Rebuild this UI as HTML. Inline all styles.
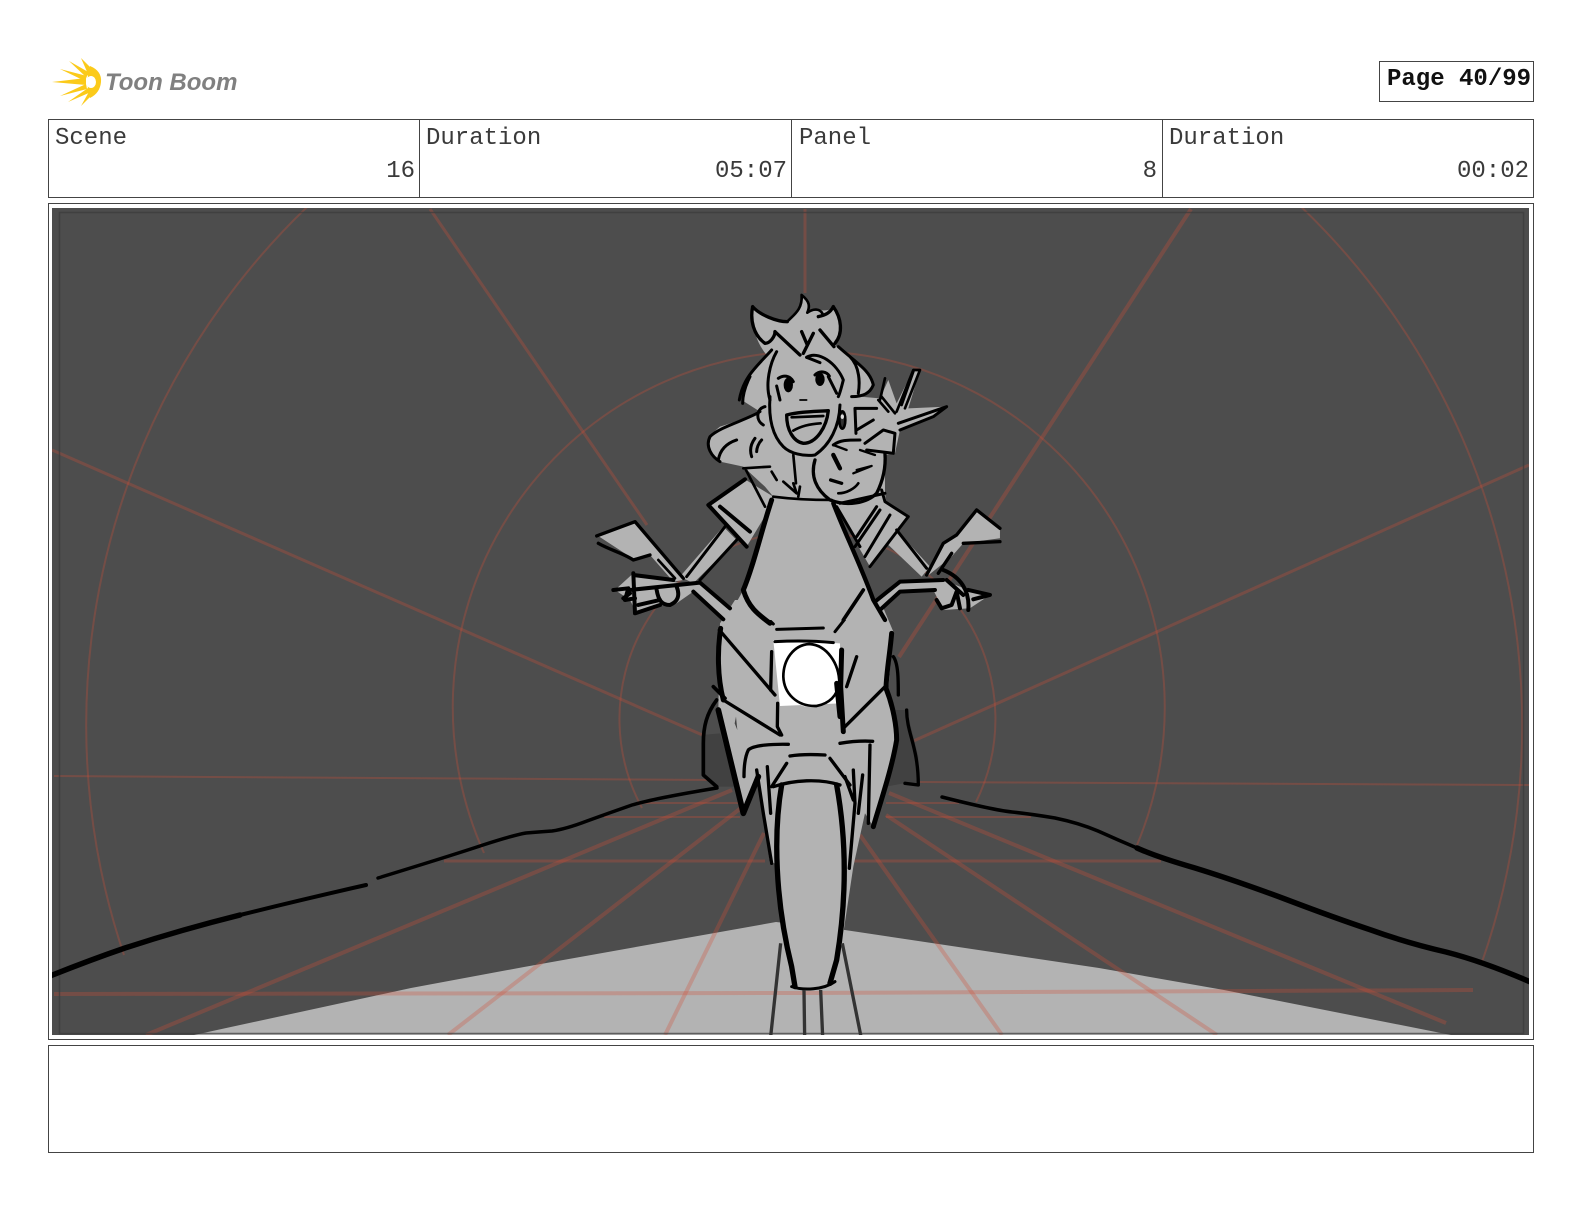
<!DOCTYPE html>
<html><head><meta charset="utf-8"><style>
html,body{margin:0;padding:0;background:#fff}
body{width:1584px;height:1224px;overflow:hidden;position:relative}
svg{position:absolute;left:0;top:0}
text{font-family:"Liberation Mono",monospace;font-size:24px;fill:#3a3a3a}
</style></head><body>
<svg width="1584" height="1224" viewBox="0 0 1584 1224" xmlns="http://www.w3.org/2000/svg">
<defs><clipPath id="c"><rect x="52" y="208" width="1477" height="827"/></clipPath></defs>
<!-- logo -->
<g fill="#fbca1a">
<path d="M52,82 L86,78 L86,85 Z"/>
<path d="M60,69 L87,76 L85,81 Z"/>
<path d="M69,61 L90,73 L86,77 Z"/>
<path d="M81,58 L94,71 L88,74 Z"/>
<path d="M60,96 L86,84 L87,89 Z"/>
<path d="M68,102 L88,88 L91,92 Z"/>
<path d="M81,106 L90,90 L95,92 Z"/>
<path d="M90,66 Q102,71 101,82 Q100,93 90,98 Q85,82 90,66 Z"/>
</g>
<ellipse cx="91" cy="82" rx="5" ry="6" fill="#fff"/>
<text x="105" y="90" style="font-family:'Liberation Sans',sans-serif;font-weight:bold;font-style:italic;font-size:24px;fill:#808080">Toon Boom</text>
<!-- page -->
<rect x="1379.5" y="61.5" width="154" height="40" fill="#fff" stroke="#444"/>
<text x="1387" y="85" style="font-weight:bold;fill:#111">Page 40/99</text>
<!-- header -->
<rect x="48.5" y="119.5" width="1485" height="78" fill="#fff" stroke="#444"/>
<path d="M419.5,119.5V197.5M791.5,119.5V197.5M1162.5,119.5V197.5" stroke="#444" fill="none"/>
<text x="55" y="144">Scene</text><text x="415" y="177" text-anchor="end">16</text>
<text x="426" y="144">Duration</text><text x="787" y="177" text-anchor="end">05:07</text>
<text x="799" y="144">Panel</text><text x="1157" y="177" text-anchor="end">8</text>
<text x="1169" y="144">Duration</text><text x="1529" y="177" text-anchor="end">00:02</text>
<!-- panel -->
<rect x="48.5" y="203.5" width="1485" height="836" fill="#fff" stroke="#444"/>
<rect x="48.5" y="1045.5" width="1485" height="107" fill="#fff" stroke="#444"/>
<g clip-path="url(#c)">
<rect x="52" y="208" width="1477" height="827" fill="#4d4d4d"/>
<path d="M194,1035 L411,988 L524,967 L776,922 L845,930 L1099,968 L1224,990 L1451,1035 Z" fill="#b3b3b3"/>
<g fill="none" stroke="#d24f38" stroke-opacity=".3">
<g stroke-width="2">
<path d="M124,955 A718,718 0 1 1 1482,962"/>
<path d="M484,853 A356,356 0 1 1 1137,845"/>
<path d="M642,808 A188,188 0 1 1 976,802"/>
<path d="M54,776 L717,780M920,782 L1535,785"/>
<path d="M604,817 H740M886,817 H1031M886,803 H959M640,803 H740"/>
</g>
<g stroke-width="3">
<path d="M52,450 L707,737M430,209 L647,525M805,209 V293M1529,465 L909,743"/>
<path d="M444,861 H765M853,861 H1161"/>
</g>
<g stroke-width="4">
<path d="M1191,209 L899,657"/>
<path d="M146,1035 L732,790M448,1035 L741,808M665,1035 L764,833M1002,1035 L860,835M1217,1035 L886,815M1446,1023 L889,793"/>
<path d="M54,994 L800,993 L1473,990"/>
</g>
</g>
<rect x="59.5" y="212.5" width="1464" height="821" fill="none" stroke="#3a3a3a" stroke-width="1.5" opacity=".7"/>
<!-- road -->
<g fill="none" stroke="#000" stroke-linecap="round" stroke-linejoin="round">
<path d="M50,976 Q90,960 125,948 Q180,930 240,915" stroke-width="5.5"/>
<path d="M240,915 Q300,900 366,885" stroke-width="4"/>
<path d="M378,878 Q453,855 483,845 Q514,835 526,833 Q538,832 552,831 Q566,829 587,821 Q609,813 632,805 Q656,798 717,788" stroke-width="3.5"/>
<path d="M942,797 Q993,810 1012,812 Q1031,814 1055,818 Q1079,823 1098,831 Q1118,840 1137,848" stroke-width="3.5"/>
<path d="M1137,848 Q1157,857 1195,868 Q1234,880 1285,899 Q1335,918 1371,930 Q1407,943 1446,952 Q1485,962 1535,984" stroke-width="5.5"/>
</g>
<!-- bike lower, zoom-2 coordinates -->
<g transform="translate(680,600) scale(.3333)">
<path d="M120,400 L65,405 L70,525 L115,560 L170,560 Z" fill="#414141"/>
<path d="M640,330 L680,330 L715,470 L715,555 L670,550 L620,560 Z" fill="#414141"/>
<path d="M120,70 L165,0 L600,0 L640,95 L625,265 L650,400 L635,500 L580,680 L555,640 L520,800 L490,1000 L460,1145 C430,1170 370,1170 345,1160 L335,1090 C300,950 290,900 285,790 L270,790 L235,550 L190,640 L115,330 Z" fill="#b3b3b3"/>
<path d="M280,120 L480,130 L480,310 L300,318 Z" fill="#fff"/>
<ellipse cx="388" cy="225" rx="78" ry="96" fill="#fff"/>
<g fill="none" stroke="#000" stroke-linecap="round" stroke-linejoin="round" stroke-width="11">
<path d="M122,85 C112,150 112,230 130,300" stroke-width="15"/>
<path d="M118,90 L285,285 M130,300 L300,405" stroke-width="10"/>
<path d="M115,330 L190,640 L235,530" stroke-width="17"/>
<path d="M100,260 L135,295 M110,300 C80,340 70,380 70,430 L70,525 L110,560" stroke-width="11"/>
<path d="M635,100 C630,160 620,210 618,265 C640,320 650,380 650,420 C635,510 600,610 580,680" stroke-width="15"/>
<path d="M640,170 C655,190 655,240 655,285 M680,330 C680,400 715,440 715,555 L675,550" stroke-width="10"/>
<path d="M615,260 L490,385 M530,170 L500,260" stroke-width="10"/>
<path d="M205,0 L280,72 M465,95 L540,0 M290,88 L430,84 M285,125 C340,122 400,122 460,128" stroke-width="9"/>
<path d="M275,155 L272,270 M293,310 L292,380 L305,405" stroke-width="10"/>
<path d="M485,150 L482,260 L490,395 M470,250 L480,350" stroke-width="15"/>
<path d="M388,132 C340,135 310,180 310,230 C312,280 350,320 410,318 C440,312 470,295 478,250 C478,190 440,135 388,132 Z" stroke-width="8"/>
<path d="M325,433 C280,432 220,435 205,450 C195,470 192,500 192,530 M480,430 C510,425 545,422 578,424 M570,435 L565,670" stroke-width="10"/>
<path d="M330,468 C360,463 400,463 435,465 M320,490 L275,560 M450,475 L510,555 M280,560 C340,540 420,535 480,555" stroke-width="10"/>
<path d="M230,510 L250,640 L275,790 M262,500 L272,640" stroke-width="10"/>
<path d="M520,510 L525,610 L508,805 M548,525 L535,640 M495,530 L520,600" stroke-width="10"/>
<path d="M305,555 C280,700 285,900 335,1100 L345,1160" stroke-width="16"/>
<path d="M470,555 C500,720 500,900 470,1080 L450,1150" stroke-width="16"/>
<path d="M335,1160 C370,1172 430,1170 465,1145" stroke-width="9"/>
</g>
<g fill="none" stroke="#333" stroke-width="10">
<path d="M302,1030 L272,1310 M372,1170 L374,1310 M422,1170 L428,1310 M487,1030 L543,1310"/>
</g>
<path d="M168,350 L172,390 L164,370 Z" fill="#444"/>
</g>
<!-- figure, zoom-1 coordinates -->
<g transform="translate(580,280) scale(.3333)">
<g fill="#b3b3b3">
<path d="M518,80 C540,105 590,125 620,125 C640,105 665,90 665,45 C690,65 690,80 690,95 C720,85 745,100 760,80 C785,115 790,160 765,195 C800,230 870,260 880,320 L840,350 L900,355 L925,300 L950,370 L1000,270 L1020,270 L985,385 L1100,380 L1060,410 L960,450 L945,520 L915,525 L915,640 L920,670 L985,710 L870,860 L760,670 L580,650 L555,620 L490,560 L420,545 C375,510 380,470 420,440 C470,425 500,410 540,395 L485,360 C490,290 530,260 560,225 C530,190 510,130 518,80 Z"/>
<path d="M490,595 L380,675 L500,800 L560,700 L580,650 Z"/>
<path d="M430,740 L470,780 L340,910 L300,890 Z"/>
<path d="M950,750 L1050,860 L1025,890 L920,790 Z"/>
<path d="M580,650 L755,660 L880,960 L920,1020 L440,1020 L490,930 Z"/>
<path d="M50,765 L165,725 L310,900 L280,905 L210,825 L165,840 Z"/>
<path d="M1190,690 L1260,740 L1260,775 L1150,790 L1115,830 L1040,890 L1090,790 L1130,760 Z"/>
<path d="M105,930 L160,880 L300,910 L360,905 L460,985 L430,1020 L340,935 L290,970 L240,975 L170,1000 L150,960 Z"/>
<path d="M890,960 L960,900 L1090,900 L1165,930 L1230,945 L1170,985 L1090,990 L1060,930 L960,935 L900,985 Z"/>
</g>
<g fill="none" stroke="#000" stroke-linecap="round" stroke-linejoin="round" stroke-width="9">
<!-- ears and top -->
<path d="M518,80 C510,120 520,165 555,190 M518,80 C540,105 590,125 622,125 M585,155 L660,225 M555,190 C570,190 585,170 585,155" stroke-width="10"/>
<path d="M760,80 C785,115 790,160 765,190 M760,80 C750,100 735,105 715,110 M700,160 L670,220 M720,150 L762,200 M665,155 L682,195" stroke-width="10"/>
<path d="M622,125 C640,105 668,90 665,45 C690,65 690,80 682,98 C700,85 720,85 728,102" stroke-width="8"/>
<!-- hair -->
<path d="M575,210 C530,260 490,290 478,360 M510,290 C500,310 488,340 488,370 M775,200 C830,250 870,270 880,315 C870,340 850,350 815,350 M810,230 C840,260 840,310 835,340"/>
<path d="M590,215 C570,250 555,310 570,360 M680,232 C715,210 770,250 790,300 C785,320 780,340 775,350"/>
<path d="M540,395 C500,420 420,440 390,470 C375,500 395,530 420,545 M470,480 C440,490 420,510 415,540 M525,475 C510,495 510,515 515,530 M545,480 C535,490 530,505 530,515"/>
<path d="M555,380 C530,385 525,420 550,435"/>
<!-- face -->
<path d="M570,350 C565,420 580,470 610,500 C630,520 670,530 705,525 C750,495 778,440 780,375"/>
<path d="M595,295 C610,285 630,285 640,305 M590,318 L600,360 M705,285 C720,270 740,275 748,288 M745,290 L770,340 M680,232 L720,248"/>
<ellipse cx="625" cy="315" rx="14" ry="22" fill="#000" stroke="none"/>
<ellipse cx="720" cy="298" rx="14" ry="20" fill="#000" stroke="none"/>
<path d="M660,360 L680,360" stroke-width="5"/>
<path d="M620,405 C660,395 700,395 745,392 C740,440 710,490 670,490 C640,485 620,450 620,405 Z" stroke-width="10"/>
<path d="M635,412 L730,408 M640,452 C660,440 690,432 722,430" stroke-width="8"/>
<ellipse cx="787" cy="420" rx="9" ry="26" fill="#333" stroke="#000" stroke-width="8"/>
<ellipse cx="787" cy="410" rx="5" ry="7" fill="#ddd" stroke="none"/>
<!-- second character -->
<path d="M705,540 C690,590 710,630 750,660 C800,680 860,670 890,640 C910,600 918,560 915,520" stroke-width="10"/>
<path d="M760,525 L780,565" stroke-width="13"/>
<path d="M820,580 L870,560 M830,570 L875,558" stroke-width="7"/>
<path d="M752,600 L785,610" stroke-width="10"/>
<path d="M775,640 C800,640 825,625 835,610" stroke-width="8"/>
<path d="M760,495 L800,510 M840,510 L885,525" stroke-width="7"/>
<!-- neck collar -->
<path d="M640,525 L648,610 M490,565 L570,560 M498,570 L555,680 M575,575 L590,600 M610,605 L650,640 L640,610 M660,620 L655,650" stroke-width="8"/>
<path d="M495,598 L385,675 L500,800 M420,680 L510,755" stroke-width="12"/>
<path d="M435,740 L320,890 M470,780 L360,900" stroke-width="9"/>
<!-- windshield -->
<path d="M580,650 C620,655 690,660 755,660" stroke-width="8"/>
<path d="M575,660 C545,750 520,860 490,930 C505,980 530,1000 570,1030" stroke-width="15"/>
<path d="M760,670 C790,750 840,850 880,960 L915,1020" stroke-width="13"/>
<path d="M850,930 L790,1020" stroke-width="11"/>
<!-- right sleeve -->
<path d="M780,670 L915,640 M905,630 L915,665 L985,710 L870,860 M900,690 L825,800 M930,705 L855,830 M890,680 L830,770" stroke-width="9"/>
<path d="M950,750 L1040,865 M770,680 L840,800" stroke-width="9"/>
<!-- peace hand -->
<path d="M825,385 L890,385 M825,385 L828,460 M830,450 L880,420" stroke-width="9"/>
<path d="M895,360 L925,395 M900,360 L915,295 M945,400 L905,350 M950,395 L1000,270 L1020,270 L975,385 M1000,275 L965,375" stroke-width="8"/>
<path d="M955,430 L1100,380 L1060,410 L960,450 M855,490 L910,450 L945,460 L940,520 L860,510 M760,495 C780,480 800,480 840,480" stroke-width="9"/>
<!-- left mirror and hand -->
<path d="M50,768 L165,725 L310,895 M55,790 C90,810 130,820 160,840 L210,825" stroke-width="10"/>
<path d="M235,840 L285,895" stroke-width="8"/>
<path d="M100,930 L145,925 L135,960 L165,955 M160,880 L165,1000 L240,975 M160,885 L280,900 M150,930 L360,908 L450,985 M340,935 L430,1018 M230,930 C235,960 245,975 270,975 C295,965 300,945 290,920 M175,975 L240,960 M130,955 L150,940" stroke-width="12"/>
<!-- right mirror and hand -->
<path d="M1190,690 L1130,765 L1090,790 L1040,885 M1190,690 L1260,745 M1150,790 L1260,785 M1115,820 L1075,880" stroke-width="10"/>
<path d="M885,965 L960,905 L1090,900 M900,990 L960,935 L1065,930 M1090,870 C1140,890 1170,930 1165,990 M1100,900 L1150,945 M1070,960 L1085,985 L1115,975 L1130,935 L1140,985 M1165,930 L1230,945 L1180,958" stroke-width="12"/>
</g>
</g>
</g>
</svg>
</body></html>
